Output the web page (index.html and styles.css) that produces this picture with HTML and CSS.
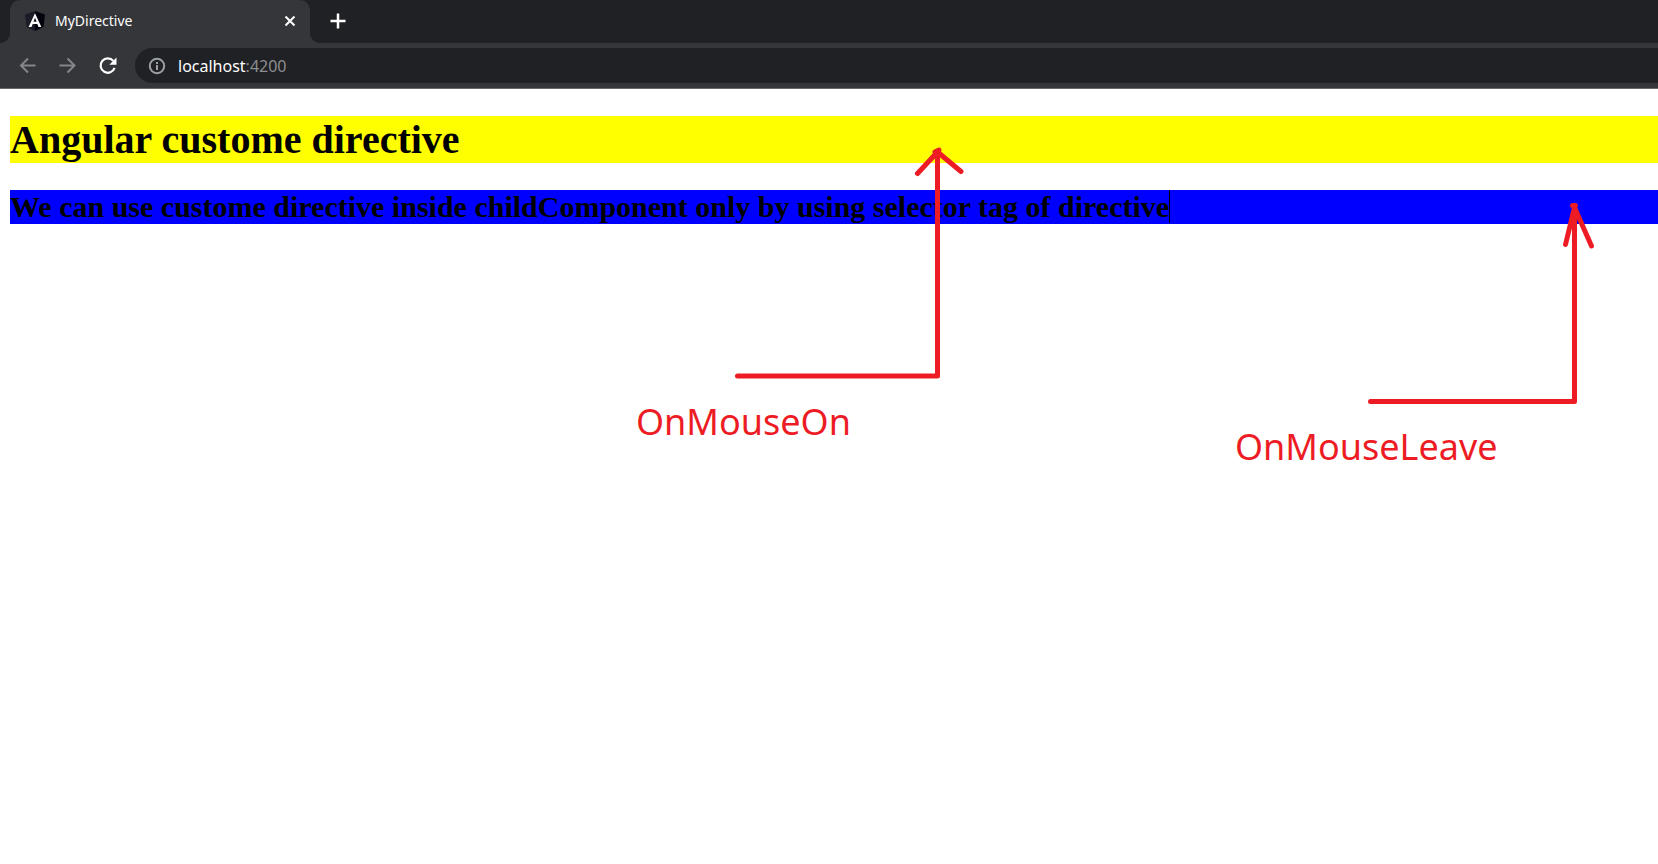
FILE: index.html
```html
<!DOCTYPE html>
<html lang="en">
<head>
<meta charset="utf-8">
<title>MyDirective</title>
<link rel="stylesheet" href="styles.css">
</head>
<body>
<header class="browser">
  <div class="tab-strip">
    <div class="tab">
      <svg class="favicon" viewBox="0 0 20 20" aria-hidden="true">
        <path fill="#1b1c27" d="M10 0 0 3.5 1.5 16 10 20z"/>
        <path fill="#02030c" d="M10 0 20 3.5 18.500 16 10 20z"/>
        <path fill="#fff" fill-rule="evenodd" d="M10 2.300 3.600 16h2.900l1.200-3h4.600l1.200 3h2.900zM10 6.800l1.600 3.900H8.400z"/>
      </svg>
      <span class="tab-title">MyDirective</span>
      <button class="tab-close" type="button" aria-label="Close tab">
        <svg class="close-icon" viewBox="0 0 12 12"><path d="M1.500 1.500l9 9M10.500 1.500l-9 9" fill="none" stroke="#fff" stroke-width="2"/></svg>
      </button>
    </div>
    <button class="new-tab" type="button" aria-label="New tab">
      <svg class="plus-icon" viewBox="0 0 16 16"><path d="M8 .5v15M.5 8h15" fill="none" stroke="#fff" stroke-width="2.500"/></svg>
    </button>
  </div>
  <div class="toolbar">
    <button class="tool" type="button" aria-label="Back">
      <svg class="tool-icon" viewBox="0 0 20 20"><path d="M17.500 9.500H3.500M10 2.500 3 9.500l7 7" fill="none" stroke="#85868a" stroke-width="2"/></svg>
    </button>
    <button class="tool" type="button" aria-label="Forward">
      <svg class="tool-icon" viewBox="0 0 20 20"><path d="M1.500 9.500h14.500M9.500 2.500l7 7-7 7" fill="none" stroke="#85868a" stroke-width="2"/></svg>
    </button>
    <button class="tool" type="button" aria-label="Reload">
      <svg class="tool-icon" viewBox="0 0 20 20"><path d="M15.300 4.900A7.200 7.200 0 1 0 16.600 11.900" fill="none" stroke="#fff" stroke-width="2.200"/><path d="M18.500 1.500V8.700h-7.200z" fill="#fff"/></svg>
    </button>
    <a class="address" href="#">
      <svg class="info-icon" viewBox="0 0 18 18" aria-hidden="true"><circle cx="9" cy="9" r="7.200" fill="none" stroke="#9aa0a6" stroke-width="2"/><path d="M9 8v5M9 5v2" stroke="#9aa0a6" stroke-width="2"/></svg>
      <span class="url">localhost<span class="port">:4200</span></span>
    </a>
  </div>
</header>
<main class="page">
  <h1 class="title">Angular custome directive</h1>
  <h2 class="subtitle"><span class="caret">We can use custome directive inside childComponent only by using selector tag of directive</span></h2>
</main>
<figure class="note note-on">
  <svg class="arrow" width="232" height="234" viewBox="0 0 232 234" aria-hidden="true">
    <path class="stroke" d="M5.500 229H205.500V5M185.500 26.500l20-21.500 23.500 19.500M203 5l4-2"/>
  </svg>
  <figcaption class="label">OnMouseOn</figcaption>
</figure>
<figure class="note note-leave">
  <svg class="arrow" width="232" height="204" viewBox="0 0 232 204" aria-hidden="true">
    <path class="stroke" d="M5.500 199.500H209.500V5M200.500 42.500l9-37 17 38.500M207.500 3.500h3"/>
  </svg>
  <figcaption class="label">OnMouseLeave</figcaption>
</figure>
</body>
</html>
```
FILE: styles.css
```css
* {
  box-sizing: border-box;
}

body {
  margin: 0;
  min-height: 100vh;
  position: relative;
  overflow-x: hidden;
  background: #fff;
  color: #000;
  font-family: "Liberation Serif", "Times New Roman", serif;
}

button {
  display: flex;
  align-items: center;
  justify-content: center;
  padding: 0;
  border: 0;
  background: none;
}

svg {
  display: block;
}

.browser {
  background: #35363a;
  border-bottom: 1px solid #67686b;
  font-family: "Noto Sans", "Open Sans", sans-serif;
}

.tab-strip {
  display: flex;
  height: 43px;
  background: #202124;
}

.tab {
  position: relative;
  display: flex;
  align-items: center;
  gap: 10px;
  width: 300px;
  margin-left: 10px;
  padding: 0 14px 1px 15px;
  border-radius: 10px 10px 0 0;
  background: #35363a;
}

.tab::before,
.tab::after {
  content: "";
  position: absolute;
  bottom: 0;
  width: 10px;
  height: 10px;
}

.tab::before {
  right: 100%;
  background: radial-gradient(circle at 0 0, #202124 10px, #35363a 10px);
}

.tab::after {
  left: 100%;
  background: radial-gradient(circle at 100% 0, #202124 10px, #35363a 10px);
}

.favicon {
  width: 20px;
  height: 20px;
}

.tab-title {
  flex: 1;
  color: #fff;
  font-size: 14px;
  line-height: 20px;
}

.close-icon {
  width: 12px;
  height: 12px;
}

.new-tab {
  width: 56px;
  padding-bottom: 1px;
}

.plus-icon {
  width: 16px;
  height: 16px;
}

.toolbar {
  display: flex;
  align-items: center;
  gap: 20px;
  padding: 5px 0 5px 18px;
}

.tool-icon {
  width: 20px;
  height: 20px;
}

.address {
  flex: 1;
  display: flex;
  align-items: center;
  gap: 12px;
  height: 35px;
  margin-left: -3px;
  padding-left: 13px;
  border-radius: 18px 0 0 18px;
  background: #202124;
  color: #fff;
  text-decoration: none;
}

.info-icon {
  width: 18px;
  height: 18px;
}

.url {
  font-size: 16px;
  line-height: 24px;
}

.port {
  color: #8b8e92;
}

.page {
  padding: 27px 0 27px 10px;
}

.title {
  margin: 0 0 27px;
  background: #ff0;
  font-size: 40px;
  line-height: 47px;
}

.subtitle {
  margin: 0;
  background: #00f;
  font-size: 30px;
  line-height: 34px;
}

.caret {
  border-right: 1px solid #000;
}

.note {
  position: absolute;
  display: flex;
  flex-direction: column;
  gap: 18px;
  margin: 0;
  color: #ed1c24;
}

.note-on {
  left: 636px;
  top: 147px;
}

.note-leave {
  left: 1235px;
  top: 202px;
}

.arrow {
  margin-left: 96px;
  overflow: visible;
}

.note-leave .arrow {
  margin-left: 130px;
}

.stroke {
  fill: none;
  stroke: #ed1c24;
  stroke-width: 5px;
  stroke-linecap: round;
  stroke-linejoin: round;
}

.label {
  font-family: "Noto Sans", "Open Sans", sans-serif;
  font-size: 36px;
  line-height: 46px;
}
```
